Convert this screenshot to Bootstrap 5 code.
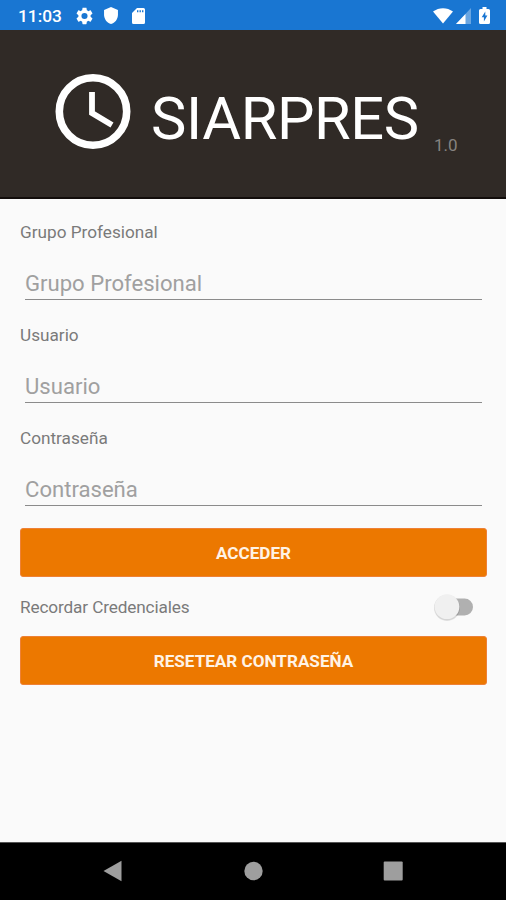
<!DOCTYPE html>
<html lang="es">
<head>
<meta charset="utf-8">
<meta name="viewport" content="width=device-width, initial-scale=1">
<title>SIARPRES</title>
<link href="https://cdn.jsdelivr.net/npm/bootstrap@5.3.0/dist/css/bootstrap.min.css" rel="stylesheet">
<style>
body{font-family:Roboto,"Noto Sans",sans-serif;background:#fafafa;color:#7a7a7a;height:900px;overflow:hidden}
svg{display:block;flex:none}
.statusbar{height:30px;background:#1976d2;color:#fff;padding:1px 16px 0 18px}
.clock{font-size:17.3px;font-weight:500;line-height:30px;width:58px}
.shield{margin-left:11px;margin-right:14px}
.signal{margin-left:3px}
.brandbar{height:169px;background:#302a26;border-bottom:2px solid #120d0b;padding-left:52px}
.brandbar .logo{margin-top:40px}
.brandbar h1{font-size:59.5px;font-weight:400;line-height:70px;letter-spacing:-.4px;margin:54px 0 0 17px;color:#fff;width:269px;white-space:nowrap}
.version{font-size:17px;line-height:24px;margin:103px 0 0 14px;color:#868380}
.login{padding:20px 19px 0 20px}
.field{margin-bottom:22px}
.field label,.remember label{font-size:17.2px;line-height:26px;display:block}
.remember label{letter-spacing:-.13px}
.field .form-control{height:55px;width:auto;align-self:stretch;margin:0 5px;padding:21px 0 0;border:0;border-bottom:1.5px solid #8b8b8b;border-radius:0;background:none;font-size:22.1px;line-height:33px}
.field .form-control::placeholder{color:#a0a0a0;opacity:1}
.btn-main{height:49px;background:#ec7800;border:1px solid #ee8136;border-radius:3px;color:#fff3e6;font-size:17.1px;font-weight:700;padding:2px 0 0}
.remember{height:59px;padding-right:12px}
.navbuttons{height:58px;background:#000;border-top:1px solid #555;padding-bottom:2px}
.navbuttons svg{margin:0 60px}
</style>
</head>
<body class="d-flex flex-column">
<div class="statusbar d-flex align-items-center">
  <span class="clock">11:03</span>
  <svg width="17" height="18" viewBox="2 2 20 20" fill="#fff"><path d="M19.14 12.94c.04-.3.06-.61.06-.94 0-.32-.02-.64-.07-.94l2.03-1.58c.18-.14.23-.41.12-.61l-1.92-3.32c-.12-.22-.37-.29-.59-.22l-2.39.96c-.5-.38-1.03-.7-1.62-.94l-.36-2.54c-.04-.24-.24-.41-.48-.41h-3.84c-.24 0-.43.17-.47.41l-.36 2.54c-.59.24-1.13.57-1.62.94l-2.39-.96c-.22-.08-.47 0-.59.22L2.74 8.87c-.12.21-.08.47.12.61l2.03 1.58c-.05.3-.09.63-.09.94s.02.64.07.94l-2.03 1.58c-.18.14-.23.41-.12.61l1.92 3.32c.12.22.37.29.59.22l2.39-.96c.5.38 1.03.7 1.62.94l.36 2.54c.05.24.24.41.48.41h3.84c.24 0 .44-.17.47-.41l.36-2.54c.59-.24 1.13-.56 1.62-.94l2.39.96c.22.08.47 0 .59-.22l1.92-3.32c.12-.22.07-.47-.12-.61zM12 15.6A3.6 3.6 0 1 1 12 8.4a3.6 3.6 0 0 1 0 7.2z"/></svg>
  <svg class="shield" width="14" height="17" viewBox="3 1 18 22" fill="#fff"><path d="M12 1 3 5v6c0 5.550 3.840 10.740 9 12 5.160-1.260 9-6.450 9-12V5z"/></svg>
  <svg width="13" height="16" viewBox="0 0 13 16" fill="#fff"><path fill-rule="evenodd" d="M5 0h6.500A1.500 1.500 0 0 1 13 1.500v13a1.500 1.500 0 0 1-1.500 1.500h-10A1.500 1.500 0 0 1 0 14.500V5zM5 2.200V4.200h1.400V2.200zM7.500 2.200V4.200h1.400V2.200zM10 2.200V4.200h1.400V2.200z"/></svg>
  <svg class="ms-auto" width="20" height="16" viewBox="0 0 20 16" fill="#fff"><path d="M0 3.500C6-1 14-1 20 3.500L10 15.500z"/></svg>
  <svg class="signal" width="15" height="16" viewBox="0 0 15 16"><path fill="#fff" opacity=".35" d="M15 0v16H0z"/><path fill="#fff" d="M9.500 5.900V16H0z"/></svg>
  <svg class="ms-2" width="11" height="17" viewBox="0 0 11 17"><path fill="#fff" d="M3.500 0h4v2h2A1.500 1.500 0 0 1 11 3.500v12A1.500 1.500 0 0 1 9.500 17h-8A1.500 1.500 0 0 1 0 15.500v-12A1.500 1.500 0 0 1 1.500 2h2z"/><path fill="#1976d2" d="M6.300 4.500 2.700 10.300h2.200v4.200l3.500-6H6.300z"/></svg>
</div>
<header class="brandbar d-flex align-items-start">
  <svg class="logo" width="82" height="82" viewBox="0 0 82 82" fill="none" stroke="#fff"><circle cx="41" cy="41.500" r="33.700" stroke-width="7.600"/><path stroke-width="5.800" d="M40 22v21l20 12"/></svg>
  <h1>SIARPRES</h1>
  <span class="version">1.0</span>
</header>
<main class="login flex-grow-1">
  <form>
    <div class="field d-flex flex-column"><label for="grupo">Grupo Profesional</label><input class="form-control" id="grupo" type="text" placeholder="Grupo Profesional"></div>
    <div class="field d-flex flex-column"><label for="usuario">Usuario</label><input class="form-control" id="usuario" type="text" placeholder="Usuario"></div>
    <div class="field d-flex flex-column"><label for="clave">Contraseña</label><input class="form-control" id="clave" type="password" placeholder="Contraseña"></div>
    <button class="btn btn-main w-100 d-block" type="button">ACCEDER</button>
    <div class="remember d-flex align-items-center justify-content-between">
      <label>Recordar Credenciales</label>
      <svg role="switch" aria-checked="false" width="42" height="30" viewBox="0 0 42 30"><rect x="8" y="6.500" width="32" height="17" rx="8.500" fill="#b0b0b0"/><circle cx="14" cy="16" r="13" fill="#000" opacity=".07"/><circle cx="14" cy="15.600" r="12.800" fill="#000" opacity=".08"/><circle cx="14" cy="14.700" r="12.400" fill="#f0f0f0"/></svg>
    </div>
    <button class="btn btn-main w-100 d-block" type="button">RESETEAR CONTRASEÑA</button>
  </form>
</main>
<nav class="navbuttons d-flex justify-content-center align-items-center">
  <svg width="20" height="22" viewBox="0 0 20 22" fill="#9e9e9e"><path d="M18.500.8v20.400L.5 11z"/></svg>
  <svg width="20" height="20" viewBox="0 0 20 20" fill="#9e9e9e"><circle cx="10.500" cy="10" r="9.200"/></svg>
  <svg width="20" height="20" viewBox="0 0 20 20" fill="#9e9e9e"><rect x=".7" y=".5" width="19" height="19" rx="1"/></svg>
</nav>
<script src="https://cdn.jsdelivr.net/npm/bootstrap@5.3.0/dist/js/bootstrap.bundle.min.js"></script>
</body>
</html>
